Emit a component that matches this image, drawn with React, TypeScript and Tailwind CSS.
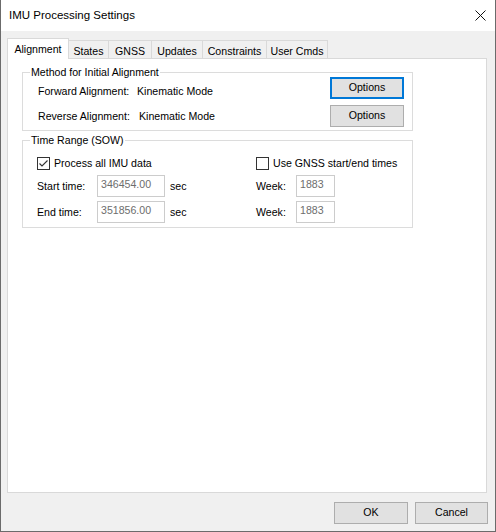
const tabs = [
  { label: "States", w: "w-[40px]" },
  { label: "GNSS", w: "w-[43px]" },
  { label: "Updates", w: "w-[51px]" },
  { label: "Constraints", w: "w-[64px]" },
  { label: "User Cmds", w: "w-[61px]" },
];

function Checkbox({ checked }: { checked?: boolean }) {
  return (
    <span className="flex h-[13px] w-[13px] shrink-0 items-center justify-center border border-[#333333] bg-white">
      {checked && (
        <svg width="11" height="11" viewBox="0 0 11 11" fill="none">
          <path d="M1.5 5.5 L4 8 L9.5 2.5" stroke="#333333" strokeWidth="1.1" />
        </svg>
      )}
    </span>
  );
}

function Field({ value, w }: { value: string; w: string }) {
  return (
    <div
      className={`h-[22px] ${w} border border-[#cccccc] bg-white pl-[3px] pt-[1px] leading-[14px] text-[#6d6d6d]`}
    >
      {value}
    </div>
  );
}

function Button({ label, w, focused }: { label: string; w: string; focused?: boolean }) {
  return (
    <button
      className={`flex h-[22px] ${w} items-center justify-center bg-[#e1e1e1] ${
        focused ? "border-2 border-[#0078d7]" : "border border-[#adadad]"
      }`}
    >
      {label}
    </button>
  );
}

export default function App() {
  return (
    <div className="flex h-[532px] w-[496px] flex-col border-x border-b border-[#6b6b6b] bg-[#f0f0f0] font-['Liberation_Sans',Arial,sans-serif] text-[10.6px] text-black">
      {/* title bar */}
      <div className="flex h-[31px] shrink-0 items-center justify-between bg-white pl-[8px] pr-[9px]">
        <span className="text-[11.5px]">IMU Processing Settings</span>
        <svg width="11" height="11" viewBox="0 0 11 11" fill="none">
          <path d="M0.5 0.5 L10.5 10.5 M10.5 0.5 L0.5 10.5" stroke="#111111" strokeWidth="1" />
        </svg>
      </div>

      <div className="flex flex-1 flex-col pl-[6px] pr-[8px] pt-[7px]">
        {/* tabs */}
        <div className="flex h-[20px] items-end">
          <div className="relative z-10 -mb-px flex h-[21px] w-[62px] items-start justify-center border-x border-t border-[#d9d9d9] bg-white pt-[4px] leading-[12px]">
            Alignment
          </div>
          {tabs.map((t) => (
            <div
              key={t.label}
              className={`flex h-[18px] ${t.w} items-start justify-center border-r border-t border-[#d9d9d9] bg-[#f0f0f0] pt-[4px] leading-[12px]`}
            >
              {t.label}
            </div>
          ))}
        </div>

        {/* panel */}
        <div className="h-[435px] w-[480px] border border-[#d9d9d9] bg-white pl-[14px]">
          <fieldset className="mt-[8px] w-[391px] border border-[#dcdcdc]">
            <legend className="ml-[7px] px-[1px] leading-[10px]">Method for Initial Alignment</legend>
            <div className="pb-[3px] pl-[15px] pr-[8px]">
              <div className="flex h-[22px] items-start">
                <span className="mt-[7px] w-[99px] leading-[14px]">Forward Alignment:</span>
                <span className="mt-[7px] leading-[14px]">Kinematic Mode</span>
                <div className="ml-auto">
                  <Button label="Options" w="w-[74px]" focused />
                </div>
              </div>
              <div className="mt-[6px] flex h-[22px] items-start">
                <span className="mt-[4px] w-[101px] leading-[14px]">Reverse Alignment:</span>
                <span className="mt-[4px] leading-[14px]">Kinematic Mode</span>
                <div className="ml-auto">
                  <Button label="Options" w="w-[74px]" />
                </div>
              </div>
            </div>
          </fieldset>

          <fieldset className="mt-[4px] w-[391px] border border-[#dcdcdc]">
            <legend className="ml-[7px] px-[1px] leading-[10px]">Time Range (SOW)</legend>
            <div className="grid grid-cols-[219px_auto] gap-y-[4px] pb-[4px] pl-[14px] pt-[12px]">
              <div className="flex h-[13px] items-center gap-[4px]">
                <Checkbox checked />
                <span className="leading-[13px]">Process all IMU data</span>
              </div>
              <div className="flex h-[13px] items-center gap-[4px]">
                <Checkbox />
                <span className="leading-[13px]">Use GNSS start/end times</span>
              </div>

              <div className="mt-[1px] flex items-center">
                <span className="w-[60px] pt-[2px]">Start time:</span>
                <Field value="346454.00" w="w-[68px]" />
                <span className="ml-[5px] pt-[2px]">sec</span>
              </div>
              <div className="mt-[1px] flex items-center">
                <span className="w-[40px] pt-[2px]">Week:</span>
                <Field value="1883" w="w-[39px]" />
              </div>

              <div className="flex items-center">
                <span className="w-[60px] pt-[2px]">End time:</span>
                <Field value="351856.00" w="w-[68px]" />
                <span className="ml-[5px] pt-[2px]">sec</span>
              </div>
              <div className="flex items-center">
                <span className="w-[40px] pt-[2px]">Week:</span>
                <Field value="1883" w="w-[39px]" />
              </div>
            </div>
          </fieldset>
        </div>

        {/* dialog buttons */}
        <div className="-mr-px mt-[9px] flex justify-end gap-[7px]">
          <Button label="OK" w="w-[74px]" />
          <Button label="Cancel" w="w-[73px]" />
        </div>
      </div>
    </div>
  );
}
